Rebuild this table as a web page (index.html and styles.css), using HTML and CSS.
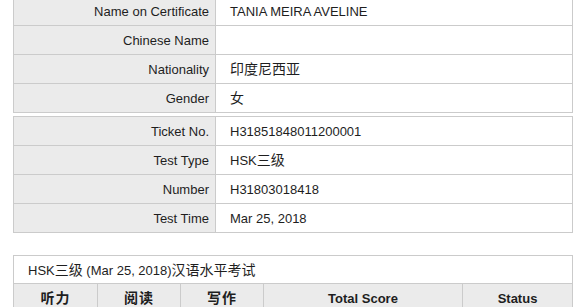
FILE: index.html
```html
<!DOCTYPE html>
<html lang="zh">
<head>
<meta charset="utf-8">
<title>HSK Score</title>
<link rel="stylesheet" href="styles.css">
</head>
<body>
<div class="page">
  <div class="tbl tbl-first">
    <div class="row"><div class="lbl">Name on Certificate</div><div class="val">TANIA MEIRA AVELINE</div></div>
    <div class="row"><div class="lbl">Chinese Name</div><div class="val"></div></div>
    <div class="row"><div class="lbl">Nationality</div><div class="val"><span class="zh">印度尼西亚</span></div></div>
    <div class="row"><div class="lbl">Gender</div><div class="val"><span class="zh">女</span></div></div>
  </div>
  <div class="tbl tbl-second">
    <div class="row"><div class="lbl">Ticket No.</div><div class="val">H31851848011200001</div></div>
    <div class="row"><div class="lbl">Test Type</div><div class="val">HSK<span class="zh">三级</span></div></div>
    <div class="row"><div class="lbl">Number</div><div class="val">H31803018418</div></div>
    <div class="row"><div class="lbl">Test Time</div><div class="val">Mar 25, 2018</div></div>
  </div>
  <div class="tbl tbl-score">
    <div class="caption">HSK<span class="zh">三级</span> (Mar 25, 2018)<span class="zh">汉语水平考试</span></div>
    <div class="score-head">
      <div class="sh"><span class="zh">听力</span></div>
      <div class="sh"><span class="zh">阅读</span></div>
      <div class="sh"><span class="zh">写作</span></div>
      <div class="sh">Total Score</div>
      <div class="sh">Status</div>
    </div>
  </div>
</div>
</body>
</html>
```
FILE: styles.css
```css
html, body {
  margin: 0;
  padding: 0;
  background: #fff;
}
body {
  font-family: "Liberation Sans", Arial, "Noto Sans CJK SC", sans-serif;
  font-size: 13px;
  color: #1e1e1e;
}
.zh {
  font-family: "Noto Sans CJK SC", sans-serif;
  font-size: 14px;
  line-height: 1;
}
.page {
  padding-left: 13px;
  margin-top: -4px;
  display: flex;
  flex-direction: column;
}
.tbl {
  width: 560px;
  box-sizing: border-box;
  border: 1px solid #cbcbcb;
}
.tbl-second {
  margin-top: 3px;
}
.tbl-score {
  margin-top: 22px;
}
.row {
  display: grid;
  grid-template-columns: 202px 1fr;
  height: 29px;
  border-bottom: 1px solid #cbcbcb;
  box-sizing: border-box;
}
.row:last-child {
  height: 28px;
  border-bottom: none;
}
.lbl {
  background: #ebebeb;
  border-right: 1px solid #cbcbcb;
  text-align: right;
  padding-right: 6px;
  padding-top: 2px;
  line-height: 26px;
  white-space: nowrap;
}
.val {
  padding-left: 14px;
  padding-top: 2px;
  line-height: 26px;
  white-space: nowrap;
}
.caption {
  height: 28px;
  box-sizing: border-box;
  padding-top: 2px;
  line-height: 26px;
  padding-left: 14px;
  border-bottom: 1px solid #cbcbcb;
  white-space: nowrap;
}
.score-head {
  display: grid;
  grid-template-columns: 84px 83px 83px 199px 1fr;
  background: #ebebeb;
}
.sh {
  height: 28px;
  box-sizing: border-box;
  padding-top: 2px;
  line-height: 26px;
  text-align: center;
  font-weight: bold;
  border-right: 1px solid #cbcbcb;
}
.sh .zh {
  letter-spacing: 1px;
}
.sh:last-child {
  border-right: none;
}
```
